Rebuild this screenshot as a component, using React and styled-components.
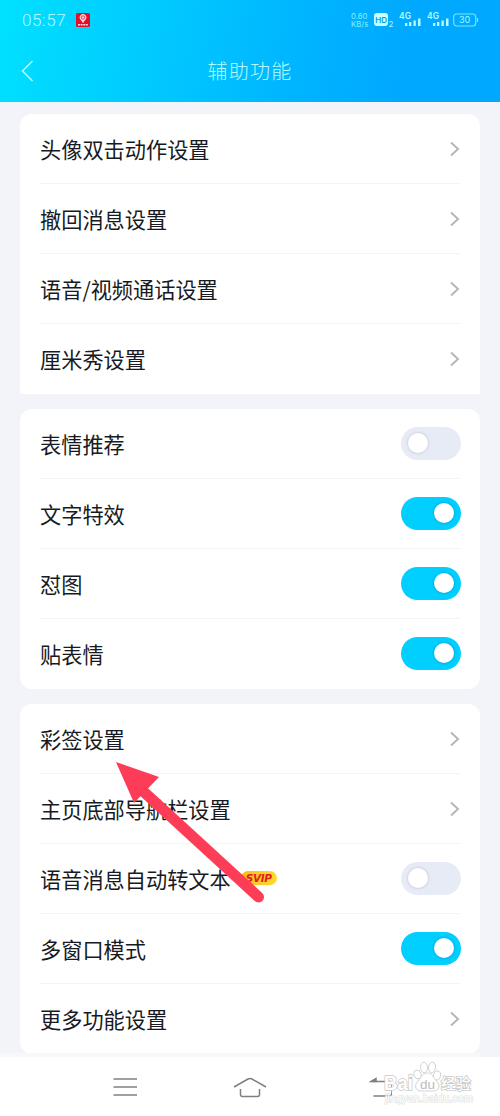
import React from "react";
import styled, { createGlobalStyle } from "styled-components";

const GlobalStyle = createGlobalStyle`
  * { box-sizing: border-box; }
  body {
    margin: 0;
    background: #f3f4fa;
    font-family: "Noto Sans CJK SC", sans-serif;
  }
`;

const Screen = styled.div`
  position: relative;
  width: 500px;
  height: 1116px;
  overflow: hidden;
  display: flex;
  flex-direction: column;
  background: #f3f4fa;
`;

const Header = styled.header`
  height: 102px;
  flex: none;
  background: linear-gradient(100deg, #00e1ff 0%, #00ccff 28%, #00b3ff 62%, #00a8ff 82%, #00a8ff 100%);
  color: #b5fbff;
`;

const StatusBar = styled.div`
  height: 40px;
  padding: 0 21px 0 22px;
  display: flex;
  align-items: center;
  justify-content: space-between;
`;

const StatusGroup = styled.div`
  display: flex;
  align-items: center;
  gap: ${(p) => p.$gap}px;
`;

const Clock = styled.span`
  width: 45px;
  font: 300 17px/20px Roboto, sans-serif;
  letter-spacing: 0.6px;
  white-space: nowrap;
`;

const NetSpeed = styled.div`
  display: flex;
  flex-direction: column;
  width: 19px;
  color: #83efff;
  font: 400 7.8px/8px Inter, sans-serif;
`;

const StatusIcon = styled.svg`
  display: block;
  flex: none;
`;

const Battery = styled(StatusIcon)`
  margin-left: -2px;
`;

const TitleBar = styled.div`
  height: 62px;
  padding: 0 21px;
  display: grid;
  grid-template-columns: 40px 1fr 40px;
  align-items: center;
`;

const Title = styled.h1`
  margin: 0 0 1px;
  text-align: center;
  font-size: 20px;
  line-height: 30px;
  font-weight: 300;
  letter-spacing: 1.25px;
`;

const Content = styled.main`
  flex: none;
  height: 955px;
  padding: 12px 20px 0;
  display: flex;
  flex-direction: column;
  gap: 15px;
`;

const Card = styled.section`
  background: #fff;
  border-radius: ${(p) => p.$radius};
  padding: 0 19px 0 20px;
`;

const Row = styled.div`
  height: 70px;
  display: flex;
  align-items: center;
  background: linear-gradient(#f3f3f5, #f3f3f5) 0 100% / calc(100% - 1px) 1px no-repeat;
  &:last-child { background: none; }
`;

const Label = styled.span`
  color: #171a23;
  font-size: 21.2px;
  line-height: 30px;
  white-space: nowrap;
  margin-bottom: 1px;
`;

const Badge = styled.span`
  margin: 0 0 3px 10px;
  width: 36px;
  height: 14px;
  border-radius: 7px;
  background: linear-gradient(90deg, #ffba1e, #ffdb2d);
  color: #df1c20;
  text-align: center;
  font: italic 700 10.5px/14px "DejaVu Sans", sans-serif;
  letter-spacing: -0.4px;
`;

const Trailing = styled.span`
  margin-left: auto;
  display: flex;
`;

const Track = styled.span`
  width: 60px;
  height: 33px;
  margin-bottom: 2px;
  padding: 0 7px;
  border-radius: 17px;
  display: flex;
  align-items: center;
  justify-content: ${(p) => (p.$on ? "flex-end" : "flex-start")};
  background: ${(p) => (p.$on ? "#00cfff" : "#e7ebf6")};
`;

const Knob = styled.span`
  width: 20px;
  height: 20px;
  border-radius: 50%;
  background: #fff;
  box-shadow: 0 0 2px 1px ${(p) => (p.$on ? "rgba(0, 120, 180, .28)" : "rgba(125, 135, 165, .2)")};
`;

const NavBar = styled.nav`
  height: 59px;
  flex: none;
  background: #fff;
  display: flex;
  justify-content: space-between;
  align-items: center;
  padding: 0 108px;
`;

const NavIcon = styled.svg`
  display: block;
  stroke: #808080;
  stroke-width: 1.5;
  fill: none;
`;

const CardEdge = styled.div`
  position: absolute;
  left: 0;
  top: 1053px;
  width: 480px;
  height: 4px;
  background: #f8f8fa;
`;

const ArrowOverlay = styled.svg`
  position: absolute;
  left: 110px;
  top: 755px;
`;

const Watermark = styled.div`
  position: absolute;
  left: 382px;
  top: 1059px;
  width: 95px;
  height: 48px;
`;

const MarkSvg = styled.svg`
  display: block;
  overflow: visible;
`;

function Chevron() {
  return (
    <svg width="12" height="16" viewBox="0 0 12 16" fill="none" stroke="#b3b5b9" strokeWidth="1.9">
      <path d="M2 1.5 9 8l-7 6.5" />
    </svg>
  );
}

function Toggle({ on }) {
  return (
    <Track $on={on} role="switch" aria-checked={on}>
      <Knob $on={on} />
    </Track>
  );
}

function Signal() {
  return (
    <StatusIcon width="24" height="20" viewBox="0 0 24 20" fill="#bafcff">
      <text x="0" y="9" fontFamily="Inter, sans-serif" fontSize="8.5" fontWeight="600">4G</text>
      <path d="M6 13h2.3v3H6zM10 12h2.3v4H10zM14.5 10.5h2.3V16h-2.3zM19 8.5h2.5V16H19z" />
    </StatusIcon>
  );
}

const groups = [
  {
    radius: "12px 12px 0 0",
    rows: [
      { label: "头像双击动作设置" },
      { label: "撤回消息设置" },
      { label: "语音/视频通话设置" },
      { label: "厘米秀设置" },
    ],
  },
  {
    radius: "12px",
    rows: [
      { label: "表情推荐", on: false },
      { label: "文字特效", on: true },
      { label: "怼图", on: true },
      { label: "贴表情", on: true },
    ],
  },
  {
    radius: "12px",
    rows: [
      { label: "彩签设置" },
      { label: "主页底部导航栏设置" },
      { label: "语音消息自动转文本", badge: "SVIP", on: false },
      { label: "多窗口模式", on: true },
      { label: "更多功能设置" },
    ],
  },
];

export default function App() {
  return (
    <>
      <GlobalStyle />
      <Screen>
        <Header>
          <StatusBar>
            <StatusGroup $gap={9}>
              <Clock>05:57</Clock>
              <StatusIcon width="14" height="14" viewBox="0 0 14 14">
                <rect width="14" height="14" rx="1.5" fill="#df102c" />
                <path d="M7 10 4.4 6.5a3.3 3.3 0 1 1 5.2 0Z" fill="#ffdbe0" />
                <circle cx="7" cy="4.5" r="1.7" fill="none" stroke="#df102c" strokeWidth=".8" />
                <path d="M2 11.8h10" stroke="#ffdbe0" strokeWidth="1.5" strokeDasharray="2 .6" />
              </StatusIcon>
            </StatusGroup>
            <StatusGroup $gap={4}>
              <NetSpeed>
                <span>0.60</span>
                <span>KB/s</span>
              </NetSpeed>
              <StatusIcon width="21" height="16" viewBox="0 0 21 16">
                <rect x="0" y="1" width="14" height="13" rx="3" fill="#c9fdff" />
                <text x="1.3" y="10.5" fontFamily="Inter, sans-serif" fontSize="8" fontWeight="600" fill="#00a0dc">HD</text>
                <text x="14.5" y="14.5" fontFamily="Inter, sans-serif" fontSize="8" fill="#a6f8ff">2</text>
              </StatusIcon>
              <Signal />
              <Signal />
              <Battery width="26" height="14" viewBox="0 0 26 14">
                <rect x=".7" y="1" width="22" height="12" rx="3" fill="none" stroke="#70eaff" strokeWidth="1.1" />
                <path d="M24.5 5v4" stroke="#70eaff" strokeWidth="1.2" />
                <text x="11.7" y="10.3" textAnchor="middle" fontFamily="Inter, sans-serif" fontSize="9" fill="#a6f8ff">30</text>
              </Battery>
            </StatusGroup>
          </StatusBar>
          <TitleBar>
            <svg width="14" height="22" viewBox="0 0 14 22" fill="none" stroke="#b5fbff" strokeWidth="1.5">
              <path d="M11.5 1 1.5 11l10 10" />
            </svg>
            <Title>辅助功能</Title>
          </TitleBar>
        </Header>
        <Content>
          {groups.map((group, i) => (
            <Card key={i} $radius={group.radius}>
              {group.rows.map((row) => (
                <Row key={row.label}>
                  <Label>{row.label}</Label>
                  {row.badge && <Badge>{row.badge}</Badge>}
                  <Trailing>{row.on === undefined ? <Chevron /> : <Toggle on={row.on} />}</Trailing>
                </Row>
              ))}
            </Card>
          ))}
        </Content>
        <NavBar>
          <NavIcon width="34" height="24" viewBox="0 0 34 24">
            <path d="M5.5 4h23.500M5.500 12h23.500M5.500 20h23.500" />
          </NavIcon>
          <NavIcon width="34" height="24" viewBox="0 0 34 24">
            <path d="m1 12 14-8q2-1 4 0l14 8M7.500 14v5.500q0 2 2 2h15q2 0 2-2V14" />
          </NavIcon>
          <NavIcon width="34" height="24" viewBox="0 0 34 24">
            <path d="M14 6.500h18.500q1.500 0 1.500 1.500v9.500q0 3.500-3 3.500H15.500" />
            <path d="m13 6.500 5-3v3z" fill="#808080" />
          </NavIcon>
        </NavBar>
        <CardEdge />
        <ArrowOverlay width="160" height="155" viewBox="0 0 160 155">
          <path d="m34 37 114.500 105" stroke="#fd3c58" strokeWidth="11" strokeLinecap="round" />
          <path d="M6 7 49 22 24 48Z" fill="#fd3c58" />
        </ArrowOverlay>
        <Watermark>
          <MarkSvg width="95" height="48" viewBox="0 0 95 48">
            <g fill="#fff" stroke="#c8c8c8" strokeWidth=".8">
              <text x="2" y="31" fontFamily="Liberation Sans, sans-serif" fontWeight="700" fontSize="20" textLength="29" lengthAdjust="spacingAndGlyphs" paintOrder="stroke" strokeWidth="1.5">Bai</text>
              <ellipse cx="35.500" cy="15.500" rx="3.500" ry="4.500" transform="rotate(-18 35.500 15.500)" />
              <ellipse cx="42" cy="8.500" rx="3.500" ry="5.200" />
              <ellipse cx="50" cy="8.500" rx="3.500" ry="5.200" transform="rotate(8 50 8.500)" />
              <ellipse cx="55" cy="16.500" rx="3.500" ry="4.500" transform="rotate(15 55 16.500)" />
              <path d="M45.500 14c5 0 6 5 9 8 5 5 2 10-3 10H39c-6 0-7-6-3-10 3-3 4-8 9.500-8Z" />
              <text x="59" y="30" fontFamily="Noto Sans CJK SC, sans-serif" fontWeight="500" fontSize="15" paintOrder="stroke" strokeWidth="1.500">经验</text>
            </g>
            <text x="38" y="30" fontFamily="Liberation Sans, sans-serif" fontSize="13.500" fill="#bcbcbc">du</text>
            <text x="3" y="42.500" fontFamily="Liberation Sans, sans-serif" fontSize="10" textLength="88" lengthAdjust="spacingAndGlyphs" fill="#fff" stroke="#dedede" strokeWidth="1" paintOrder="stroke">jingyan.baidu.com</text>
          </MarkSvg>
        </Watermark>
      </Screen>
    </>
  );
}
